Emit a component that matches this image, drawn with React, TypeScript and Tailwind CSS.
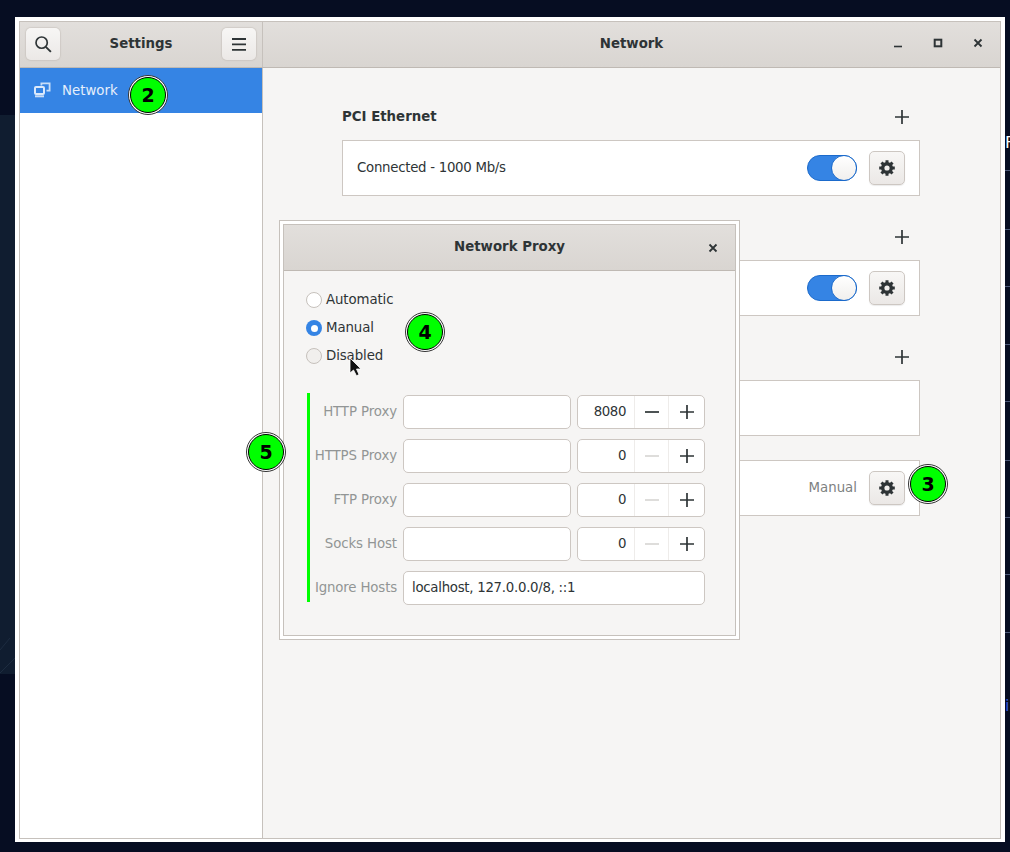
import React from "react";

const font = { fontFamily: '"DejaVu Sans", sans-serif' };

function Plus({ className = "" }: { className?: string }) {
  return (
    <svg width="14" height="14" viewBox="0 0 14 14" className={className}>
      <path d="M0 7H14M7 0V14" stroke="currentColor" strokeWidth="1.7" fill="none" />
    </svg>
  );
}

function Minus({ className = "" }: { className?: string }) {
  return (
    <svg width="14" height="14" viewBox="0 0 14 14" className={className}>
      <path d="M0 7H14" stroke="currentColor" strokeWidth="1.7" fill="none" />
    </svg>
  );
}

function Gear() {
  const angles = [0, 45, 90, 135];
  return (
    <svg width="16" height="16" viewBox="0 0 16 16">
      <circle cx="8" cy="8" r="4.3" fill="none" stroke="#2e3436" strokeWidth="3.4" />
      {angles.map((a) => (
        <path key={a} d="M8 0.2V15.8" stroke="#2e3436" strokeWidth="3" strokeDasharray="3 9.6" transform={`rotate(${a} 8 8)`} />
      ))}
    </svg>
  );
}

function GearButton() {
  return (
    <button className="flex h-[34px] w-[36px] items-center justify-center rounded-[5px] border border-[#cdc7c2] bg-gradient-to-b from-[#f8f7f6] to-[#ebe8e6] shadow-[0_1px_1px_rgba(0,0,0,0.08)]">
      <Gear />
    </button>
  );
}

function Toggle() {
  return (
    <div className="relative h-[26px] w-[50px] rounded-full border border-[#1b6acb] bg-[#3584e4]">
      <div className="absolute right-[-1px] top-[-1px] h-[26px] w-[26px] rounded-full border border-[#1b6acb] bg-gradient-to-b from-white to-[#f1efed]" />
    </div>
  );
}

function HeaderButton({ children }: { children: React.ReactNode }) {
  return (
    <button className="flex h-[32px] w-[34px] items-center justify-center rounded-[5px] bg-gradient-to-b from-[#f7f6f5] to-[#ebe8e6] shadow-[0_0_1px_1px_rgba(190,184,178,0.45)]">
      {children}
    </button>
  );
}

function Section({ title, className = "", children }: { title?: string; className?: string; children?: React.ReactNode }) {
  return (
    <div className={"flex flex-col " + className}>
      <div className="flex h-[34px] items-start justify-between pr-[11px]">
        <span className="pt-[2px] text-[13.33px] font-bold leading-[18px] text-[#2e3436]">{title}</span>
        <Plus className="mt-[4px] text-[#2e3436]" />
      </div>
      <div className="flex h-[56px] items-center justify-between border border-[#cdc7c2] bg-white px-[14px]">
        {children}
      </div>
    </div>
  );
}

function Badge({ n, className }: { n: string; className: string }) {
  return (
    <div
      className={
        "absolute flex h-[40px] w-[40px] items-center justify-center rounded-full border border-[#333] bg-white p-[1px] " +
        className
      }
    >
      <div className="flex h-full w-full items-center justify-center rounded-full border border-black bg-[#00ff00] text-[19px] font-bold text-black">
        {n}
      </div>
    </div>
  );
}

function Radio({ label, state }: { label: string; state: "off" | "on" | "disabled" }) {
  return (
    <div className="flex h-[28px] items-center gap-[4px]">
      {state === "on" ? (
        <div className="flex h-[16px] w-[16px] items-center justify-center rounded-full bg-[#3584e4]">
          <div className="h-[7px] w-[7px] rounded-full bg-white" />
        </div>
      ) : (
        <div
          className={
            "h-[16px] w-[16px] rounded-full border border-[#c6c1bc] " +
            (state === "off" ? "bg-white" : "bg-[#f1efed]")
          }
        />
      )}
      <span className="text-[13.33px] tracking-[-0.1px] text-[#2e3436]">{label}</span>
    </div>
  );
}

function ProxyRow({ label, port }: { label: string; port: string }) {
  const zero = port === "0";
  return (
    <div className="flex h-[34px] items-center">
      <span className="w-[96px] whitespace-nowrap pr-[6px] text-right text-[13.33px] tracking-[-0.1px] text-[#929595]">{label}</span>
      <div className="h-[34px] w-[168px] rounded-[5px] border border-[#cdc7c2] bg-white" />
      <div className="ml-[6px] flex h-[34px] w-[128px] items-stretch rounded-[5px] border border-[#cdc7c2] bg-white">
        <span className="flex w-[56px] items-center justify-end pr-[8px] text-[13.33px] tracking-[-0.4px] text-[#2e3436]">{port}</span>
        <span className={"flex w-[35px] items-center justify-center border-x border-[#eeecea] " + (zero ? "text-[#d9d7d5]" : "text-[#2e3436]")}>
          <Minus />
        </span>
        <span className="flex flex-1 items-center justify-center text-[#2e3436]">
          <Plus />
        </span>
      </div>
    </div>
  );
}

function Cursor() {
  return (
    <svg width="14" height="20" viewBox="0 0 14 20" className="absolute left-[349px] top-[357px]">
      <path d="M1 1V16L4.5 13L7.5 18.8L10 17.6L7.5 12H12Z" fill="#111" stroke="#fff" strokeWidth="0.8" />
    </svg>
  );
}

export default function App() {
  const lines = [170, 229, 286, 344, 401, 460, 517, 574, 632];
  return (
    <div style={font} className="relative h-[852px] w-[1010px] overflow-hidden bg-[#060d22]">
      <div className="absolute left-0 top-[115px] h-[559px] w-[15px] bg-[#101d30]">
        <svg width="15" height="559" viewBox="0 0 15 559">
          <path d="M0 535L10 523M0 558L15 543" stroke="#1d2c40" strokeWidth="1" fill="none" />
        </svg>
      </div>
      {lines.map((y) => (
        <div key={y} className="absolute left-[1005px] h-px w-[5px] bg-[#4a5878]" style={{ top: y }} />
      ))}
      <span className="absolute left-[1005px] top-[134px] text-[16px] leading-[18px] text-white">F</span>
      <span className="absolute left-[1005px] top-[697px] text-[16px] leading-[18px] text-[#3558d8]">i</span>

      <div className="ml-[15px] mt-[17px] h-[825px] w-[990px] bg-white px-[4px] pb-[3px] pt-[4px]">
        <div className="flex h-full w-full flex-col border border-[#c6c1bc] bg-white">
          <div className="flex h-[46px] flex-none border-b border-[#bfb9b3] bg-gradient-to-b from-[#e2dfdc] to-[#d9d5d1]">
            <div className="flex w-[243px] flex-none items-center justify-between border-r border-[#c6c1bc] px-[6px] pb-[1px]">
              <HeaderButton>
                <svg width="18" height="18" viewBox="0 0 16 16">
                  <circle cx="6.8" cy="6.8" r="5" fill="none" stroke="#2e3436" strokeWidth="1.5" />
                  <path d="M10.5 10.5L15 15" stroke="#2e3436" strokeWidth="1.7" />
                </svg>
              </HeaderButton>
              <span className="pb-[1px] text-[13.33px] font-bold text-[#2e3436]">Settings</span>
              <HeaderButton>
                <svg width="16" height="14" viewBox="0 0 16 14">
                  <path d="M1 2H15M1 7.4H15M1 12.8H15" stroke="#2e3436" strokeWidth="1.8" />
                </svg>
              </HeaderButton>
            </div>
            <div className="relative flex flex-1 items-center justify-center pb-[2px]">
              <span className="text-[13.33px] font-bold text-[#2e3436]">Network</span>
              <div className="absolute right-[17px] top-[16px] flex items-center gap-[30px]">
                <svg width="10" height="10" viewBox="0 0 10 10">
                  <path d="M1 8.5H9" stroke="#2e3436" strokeWidth="1.6" />
                </svg>
                <svg width="10" height="10" viewBox="0 0 10 10">
                  <rect x="1.7" y="1.7" width="6.6" height="6.6" fill="none" stroke="#2e3436" strokeWidth="2" />
                </svg>
                <svg width="10" height="10" viewBox="0 0 10 10">
                  <path d="M1.5 1.5L8.5 8.5M8.5 1.5L1.5 8.5" stroke="#2e3436" strokeWidth="1.8" />
                </svg>
              </div>
            </div>
          </div>

          <div className="flex min-h-0 flex-1">
            <div className="w-[243px] flex-none border-r border-[#c6c1bc] bg-white">
              <div className="flex h-[45px] items-center bg-[#3584e4] pl-[13px] text-[13.33px] text-[#e6effb]">
                <svg width="18" height="16" viewBox="0 0 18 16" className="mb-[1px] mr-[11px]">
                  <path d="M7.5 0.5H17.5V9.5H13.5V7.7H15.7V2.3H9.3V3.5H7.5Z" fill="#c8ddf7" />
                  <rect x="2" y="5" width="9" height="7" rx="1" fill="#3584e4" stroke="#dbe9fb" strokeWidth="2" />
                  <path d="M2 13.3H11V15.3H2Z" fill="#c8ddf7" />
                </svg>
                Network
              </div>
            </div>
            <div className="min-w-0 flex-1 bg-[#f6f5f4] pl-[79px] pt-[38px]">
              <div className="flex w-[578px] flex-col">
                <Section title="PCI Ethernet" className="pb-[30px]">
                  <span className="text-[13.33px] tracking-[-0.28px] text-[#2e3436]">Connected - 1000 Mb/s</span>
                  <div className="flex items-center gap-[12px]">
                    <Toggle />
                    <GearButton />
                  </div>
                </Section>
                <Section className="pb-[30px]">
                  <span />
                  <div className="flex items-center gap-[12px]">
                    <Toggle />
                    <GearButton />
                  </div>
                </Section>
                <Section className="pb-[24px]" />
                <div className="flex h-[56px] items-center justify-end gap-[12px] border border-[#cdc7c2] bg-white pr-[14px]">
                  <span className="text-[13.33px] text-[#7d8181]">Manual</span>
                  <GearButton />
                </div>
              </div>
            </div>
          </div>
        </div>
      </div>

      <div className="absolute left-[279px] top-[220px] h-[420px] w-[461px] border border-[#c6c1bc] bg-white p-[3px]">
        <div className="flex h-full w-full flex-col border border-[#c6c1bc] bg-[#f6f5f4]">
          <div className="relative flex h-[46px] flex-none items-center justify-center border-b border-[#bfb9b3] bg-gradient-to-b from-[#e2dfdc] to-[#d9d5d1] pb-[2px]">
            <span className="text-[13.33px] font-bold text-[#2e3436]">Network Proxy</span>
            <svg width="10" height="10" viewBox="0 0 10 10" className="absolute right-[17px] top-[18px]">
              <path d="M1.5 1.5L8.5 8.5M8.5 1.5L1.5 8.5" stroke="#2e3436" strokeWidth="1.8" />
            </svg>
          </div>
          <div className="flex flex-col pl-[22px] pt-[15px]">
            <Radio label="Automatic" state="off" />
            <Radio label="Manual" state="on" />
            <Radio label="Disabled" state="disabled" />
            <div className="mt-[23px] flex">
              <div className="ml-[1px] h-[209px] w-[3px] bg-[#00ff00]" />
              <div className="-ml-[3px] mt-[2px] flex flex-col gap-[10px]">
                <ProxyRow label="HTTP Proxy" port="8080" />
                <ProxyRow label="HTTPS Proxy" port="0" />
                <ProxyRow label="FTP Proxy" port="0" />
                <ProxyRow label="Socks Host" port="0" />
                <div className="flex h-[34px] items-center">
                  <span className="w-[96px] whitespace-nowrap pr-[6px] text-right text-[13.33px] tracking-[-0.15px] text-[#929595]">Ignore Hosts</span>
                  <div className="flex h-[34px] w-[302px] items-center rounded-[5px] border border-[#cdc7c2] bg-white pl-[8px] text-[13.33px] tracking-[-0.28px] text-[#2e3436]">
                    localhost, 127.0.0.0/8, ::1
                  </div>
                </div>
              </div>
            </div>
          </div>
        </div>
      </div>

      <Cursor />
      <Badge n="2" className="left-[128px] top-[75px]" />
      <Badge n="3" className="left-[908px] top-[464px]" />
      <Badge n="4" className="left-[405px] top-[312px]" />
      <Badge n="5" className="left-[246px] top-[432px]" />
    </div>
  );
}
